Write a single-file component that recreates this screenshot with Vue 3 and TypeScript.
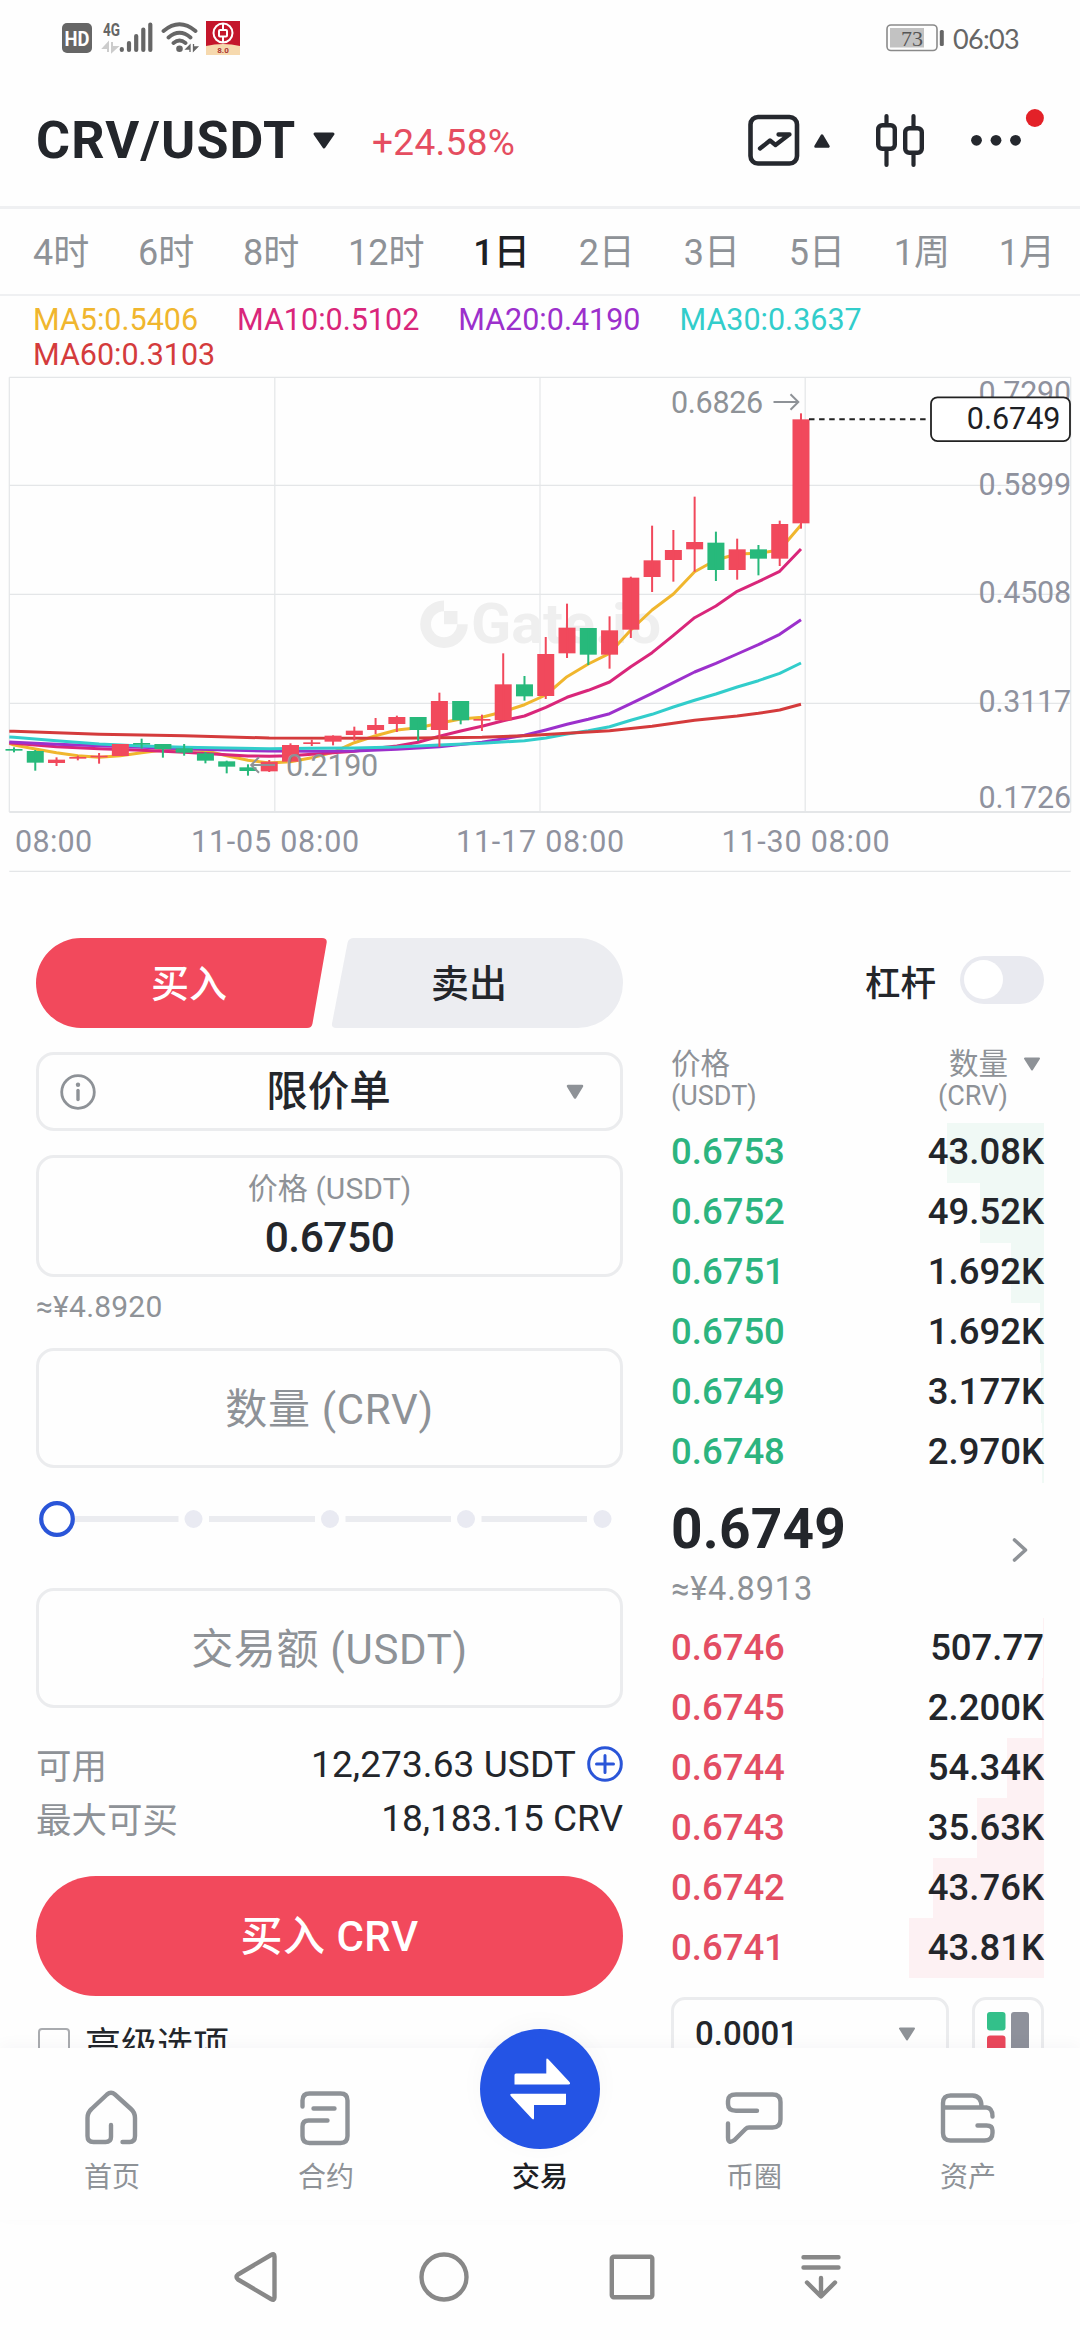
<script setup lang="ts">
import { ref } from 'vue'

type Candle = [up: 0 | 1, top: number, bottom: number, high: number, low: number]
interface BookRow { price: string; amount: string; depth: number }

const pair = 'CRV/USDT'
const periods = ['4时', '6时', '8时', '12时', '1日', '2日', '3日', '5日', '1周', '1月']
const activePeriod = ref('1日')

const averages = [
  { text: 'MA5:0.5406', color: '#f0b62e' },
  { text: 'MA10:0.5102', color: '#d9267a' },
  { text: 'MA20:0.4190', color: '#9c30cc' },
  { text: 'MA30:0.3637', color: '#32cdcb' },
  { text: 'MA60:0.3103', color: '#d43b3c' },
]

// Vertical chart values are in thirds of a pixel.
const S = 3
const xAt = (i: number): number => 14 + 21.27 * i

const candles: Candle[] = [
  [0, 1137, 1142, 1132, 1147], [0, 1143, 1178, 1140, 1202], [1, 1169, 1179, 1162, 1188],
  [1, 1161, 1166, 1157, 1171], [1, 1157, 1162, 1149, 1181], [1, 1122, 1158, 1122, 1158],
  [0, 1119, 1124, 1106, 1136], [0, 1122, 1137, 1122, 1163], [0, 1135, 1148, 1122, 1157],
  [0, 1150, 1172, 1146, 1180], [0, 1174, 1190, 1172, 1210], [0, 1192, 1203, 1183, 1217],
  [1, 1175, 1204, 1170, 1206], [1, 1125, 1175, 1120, 1177], [1, 1117, 1122, 1109, 1128],
  [1, 1097, 1115, 1096, 1126], [1, 1082, 1095, 1070, 1112], [1, 1065, 1080, 1044, 1092],
  [1, 1041, 1062, 1037, 1086], [0, 1041, 1080, 1041, 1113], [1, 993, 1080, 968, 1131],
  [0, 993, 1051, 993, 1063], [1, 1047, 1052, 1034, 1083], [1, 943, 1051, 850, 1052],
  [0, 943, 979, 918, 992], [1, 852, 978, 801, 987], [1, 773, 850, 701, 864],
  [0, 774, 854, 774, 885], [1, 781, 854, 739, 896], [1, 623, 779, 620, 804],
  [1, 571, 621, 467, 666], [1, 540, 570, 480, 635], [1, 516, 538, 380, 605],
  [0, 518, 600, 485, 633], [1, 538, 600, 506, 629], [0, 538, 566, 525, 616],
  [1, 462, 566, 452, 588], [1, 148, 460, 130, 476],
]

const series: { color: string; start: number; points: [number, number][] }[] = [
  {
    color: '#f0b62e', start: 1120,
    points: [[0, 1125], [1, 1137], [2, 1148], [3, 1157], [4, 1162], [5, 1157], [6, 1148], [7, 1140], [8, 1137],
      [9, 1142], [10, 1157], [11, 1171], [12, 1179], [13, 1175], [14, 1163], [15, 1147], [16, 1118], [17, 1097],
      [18, 1080], [19, 1073], [20, 1060], [21, 1047], [22, 1042], [23, 1025], [24, 1004], [25, 975], [26, 920],
      [27, 882], [28, 850], [29, 780], [30, 720], [31, 672], [32, 605], [33, 570], [34, 552], [35, 550], [36, 540],
      [37, 465]],
  },
  {
    color: '#d9267a', start: 1119,
    points: [[0, 1120], [2, 1130], [4, 1136], [6, 1141], [8, 1147], [10, 1154], [11, 1158], [12, 1159], [13, 1157],
      [14, 1153], [15, 1148], [16, 1144], [17, 1135], [18, 1128], [19, 1117], [20, 1099], [21, 1083], [22, 1069],
      [23, 1052], [24, 1038], [25, 1012], [26, 982], [27, 961], [28, 936], [29, 890], [30, 848], [31, 796],
      [32, 743], [33, 708], [34, 664], [35, 635], [36, 604], [37, 537]],
  },
  {
    color: '#9c30cc', start: 1116,
    points: [[0, 1117], [2, 1123], [4, 1127], [6, 1132], [8, 1136], [10, 1140], [12, 1143], [14, 1144], [16, 1143],
      [18, 1138], [20, 1130], [22, 1117], [24, 1096], [25, 1080], [26, 1063], [27, 1048], [28, 1031], [29, 1001],
      [30, 970], [31, 938], [32, 906], [33, 880], [34, 852], [35, 824], [36, 793], [37, 749]],
  },
  {
    color: '#32cdcb', start: 1101,
    points: [[0, 1102], [2, 1112], [4, 1122], [6, 1128], [8, 1132], [10, 1134], [12, 1136], [14, 1135], [16, 1134],
      [18, 1131], [20, 1125], [22, 1120], [24, 1112], [25, 1104], [26, 1092], [27, 1082], [28, 1070], [29, 1051],
      [30, 1033], [31, 1011], [32, 991], [33, 972], [34, 951], [35, 932], [36, 910], [37, 879]],
  },
  {
    color: '#d43b3c', start: 1084,
    points: [[0, 1084], [4, 1093], [8, 1097], [12, 1104], [18, 1105], [22, 1102], [24, 1097], [26, 1090], [28, 1082],
      [30, 1069], [32, 1051], [34, 1038], [35, 1030], [36, 1020], [37, 1003]],
  },
]

const linePoints = (start: number, points: [number, number][]): string =>
  [`9.3,${start / S}`, ...points.map(([i, y]) => `${xAt(i).toFixed(1)},${(y / S).toFixed(1)}`)].join(' ')

const priceLabels = [
  { y: 32.7, text: '0.7290' },
  { y: 124.8, text: '0.5899' },
  { y: 232.8, text: '0.4508' },
  { y: 341.8, text: '0.3117' },
  { y: 437.7, text: '0.1726' },
]

const asks: BookRow[] = [
  { price: '0.6753', amount: '43.08K', depth: 97 },
  { price: '0.6752', amount: '49.52K', depth: 64 },
  { price: '0.6751', amount: '1.692K', depth: 33 },
  { price: '0.6750', amount: '1.692K', depth: 4 },
  { price: '0.6749', amount: '3.177K', depth: 3 },
  { price: '0.6748', amount: '2.970K', depth: 2 },
]
const bids: BookRow[] = [
  { price: '0.6746', amount: '507.77', depth: 1 },
  { price: '0.6745', amount: '2.200K', depth: 2 },
  { price: '0.6744', amount: '54.34K', depth: 37 },
  { price: '0.6743', amount: '35.63K', depth: 67 },
  { price: '0.6742', amount: '43.76K', depth: 111 },
  { price: '0.6741', amount: '43.81K', depth: 135 },
]

const tabs = [
  {
    label: '首页',
    icon: 'M29 37V49Q29 54 23.500 54H11.500Q5.500 54 5.500 48V30Q5.500 24.500 9.500 21L25 6.500Q29 3 33 6.500L49 21Q53 24.500 53 30V48Q53 54 47.500 54H40.500',
  },
  {
    label: '合约',
    icon: 'M6.500 18.500V12.500Q6.500 5.500 13.500 5.500H44.500Q51.500 5.500 51.500 12.500V48Q51.500 55 44.500 55H13.500Q6.500 55 6.500 48V38.500Q6.500 32.500 12.500 32.500H31.500M17.500 20.500H38.500',
  },
  { label: '交易', icon: '' },
  {
    label: '币圈',
    icon: 'M33 22.700H12Q4 22.700 4 16V13Q4 6.500 12 6.500H48.500Q56.500 6.500 56.500 14V31.500Q56.500 39.500 48.500 39.500H25Q23 39.500 21.500 41L10.500 52Q4 56.500 4 49.500V35.500',
  },
  {
    label: '资产',
    icon: 'M5 19.500H48.500Q54.500 20 54.500 28.500M5 15Q5 7.500 12.500 7.500H34.500Q43.500 8 43.500 18.500M5 15V45Q5 52.500 12.500 52.500H46.500Q54.500 52.500 54.500 45V42.500Q54.500 37.500 48.500 37.500H39.500',
  },
]
</script>

<template>
  <div class="screen">
    <div class="status">
      <svg class="status-left" width="190" height="40" viewBox="58 18 190 40">
        <rect x="62" y="23" width="30" height="30" rx="5" fill="#666" />
        <text x="77" y="45.500" text-anchor="middle" textLength="25" lengthAdjust="spacingAndGlyphs" class="hd">HD</text>
        <text x="103" y="36" textLength="17" lengthAdjust="spacingAndGlyphs" class="net">4G</text>
        <path d="M108 52V43L103.500 48H108M112 42V51.500L117 47H112" fill="#ccc" stroke="#ccc" stroke-width="2" />
        <g stroke="#666" stroke-width="4.200" stroke-linecap="round">
          <path d="M121.800 49V50M129 43V50M136.200 36V50M143.300 29.500V50M150.300 24.500V50" />
        </g>
        <g fill="none" stroke="#666" stroke-width="3.800" stroke-linecap="round">
          <path d="M163.500 31Q179.500 17.500 195.500 31M168.500 37.500Q179.500 28 190.500 37.500M173.500 43Q179.500 38 185.500 43" />
        </g>
        <circle cx="179.500" cy="48.700" r="3.300" fill="#666" />
        <path d="M190 52V45L186 49H190M193.500 44V51L197.500 47H193.500" fill="#666" stroke="#666" stroke-width="1.300" />
        <rect x="206" y="21" width="34" height="34" fill="#c4162b" />
        <path d="M206 46Q223 42 240 46V55H206Z" fill="#f6d9ae" />
        <circle cx="223" cy="33" r="9.500" fill="none" stroke="#fff" stroke-width="2" />
        <rect x="219" y="30" width="8" height="6.500" rx="1" fill="none" stroke="#fff" stroke-width="2" />
        <path d="M223 23V30M223 36.500V43" stroke="#fff" stroke-width="2" />
        <text x="223" y="52.500" text-anchor="middle" class="badge-ver">8.0</text>
      </svg>
      <div class="status-right">
        <svg width="60" height="30" viewBox="885 22 60 30">
          <rect x="887" y="25" width="50" height="25.500" rx="4" fill="none" stroke="#8a8a8a" stroke-width="1.600" />
          <rect x="890" y="28" width="34" height="19.500" fill="#c2c2c2" />
          <rect x="939.800" y="30" width="4" height="16" rx="1.500" fill="#666" />
          <text x="901" y="46" class="battery-num">73</text>
        </svg>
        <span class="clock">06:03</span>
      </div>
    </div>

    <header class="header">
      <h1>{{ pair }}</h1>
      <svg class="caret" width="24" height="20" viewBox="0 0 24 20">
        <path d="M3 3H21L12 16Z" fill="#23262c" stroke="#23262c" stroke-width="3" stroke-linejoin="round" />
      </svg>
      <span class="change">+24.58%</span>
      <svg class="tools" width="304" height="64" viewBox="744 106 304 64" fill="none" stroke="#25282e" stroke-linecap="round" stroke-linejoin="round">
        <rect x="750.500" y="117" width="46.500" height="46.500" rx="7.500" stroke-width="4.600" />
        <path d="M760 148.500L770 140.500L775.500 145L788.500 135M778.500 134.500H789.500" stroke-width="4.300" />
        <path d="M822 135.500L828.500 146.500H815.500Z" fill="#25282e" stroke-width="2.500" />
        <rect x="878.200" y="125.200" width="16.600" height="23.600" rx="4" stroke-width="4.400" />
        <rect x="905.200" y="128.200" width="16.600" height="24.600" rx="4" stroke-width="4.400" />
        <path d="M886.500 116V123M886.500 151V165M913.500 116V126M913.500 155V165" stroke-width="4.200" />
        <g fill="#25282e" stroke="none">
          <circle cx="976.500" cy="140.300" r="5.400" />
          <circle cx="996" cy="140.300" r="5.400" />
          <circle cx="1015.500" cy="140.300" r="5.400" />
        </g>
        <circle cx="1034.900" cy="118" r="9" fill="#e32128" stroke="none" />
      </svg>
    </header>

    <nav class="periods">
      <button v-for="p in periods" :key="p" :class="{ active: p === activePeriod }" @click="activePeriod = p">{{ p }}</button>
    </nav>

    <div class="legend">
      <span v-for="m in averages" :key="m.text" :style="{ color: m.color }">{{ m.text }}</span>
    </div>

    <svg class="chart" width="1080" height="505" viewBox="0 0 1080 505">
      <g stroke="#e4e6e8" stroke-width="1.200" fill="none">
        <path d="M9.300 7.300H1070.700M9.300 115.300H1070.700M9.300 224.300H1070.700M9.300 333.300H1070.700" />
        <path d="M9.300 7.300V442M274.800 7.300V442M540 7.300V442M805.200 7.300V442M1070.700 7.300V442" />
        <path d="M9.300 442H1070.700" stroke-width="1.800" />
        <path d="M9.300 501.300H1070.700" />
      </g>
      <g fill="#efefef">
        <path d="M444 230.400A23.800 23.800 0 1 0 467.800 254.200H457A13 13 0 1 1 444 241.200Z" />
        <rect x="444" y="241" width="13.500" height="13.200" />
        <text x="471" y="273" textLength="190" lengthAdjust="spacingAndGlyphs" class="mark">Gate.io</text>
      </g>
      <polyline
        v-for="s in series" :key="s.color" :points="linePoints(s.start, s.points)"
        fill="none" :stroke="s.color" stroke-width="3" stroke-linejoin="round"
      />
      <g v-for="(c, i) in candles" :key="i" :fill="c[0] ? '#f1495c' : '#27b97b'">
        <rect :x="xAt(i) - 8.500" :y="c[1] / S" width="17" :height="(c[2] - c[1]) / S" />
        <rect :x="xAt(i) - 1" :y="c[3] / S" width="2" :height="(c[4] - c[3]) / S" />
      </g>
      <g class="note">
        <text x="671" y="42.700">0.6826</text>
        <path d="M773.500 32H798M790.500 24.200L798.300 32L790.500 39.800" />
        <text x="286" y="405.700">0.2190</text>
        <path d="M275 395H251.500M259 387.200L251.200 395L259 402.800" />
      </g>
      <g class="axis" text-anchor="end">
        <text v-for="l in priceLabels" :key="l.text" x="1071" :y="l.y">{{ l.text }}</text>
      </g>
      <g class="axis" text-anchor="middle">
        <text x="53.500" y="482" textLength="77">08:00</text>
        <text x="275" y="482" textLength="168">11-05 08:00</text>
        <text x="540" y="482" textLength="168">11-17 08:00</text>
        <text x="805.500" y="482" textLength="168">11-30 08:00</text>
      </g>
      <path d="M809 49.300H930" stroke="#222" stroke-width="2" stroke-dasharray="5.500 4.600" />
      <rect x="931" y="27.300" width="139" height="43.800" rx="6.500" fill="#fff" stroke="#222" stroke-width="1.800" />
      <text x="1060.500" y="59" text-anchor="end" class="tag">0.6749</text>
    </svg>

    <main class="trade">
      <section class="form">
        <div class="sides">
          <svg width="587" height="90" viewBox="0 0 587 90">
            <path d="M45 0H286Q291.500 0 290.600 5L276.500 85.500Q275.700 90 271 90H45A45 45 0 0 1 45 0Z" fill="#f2495c" />
            <path d="M318 0H542A45 45 0 0 1 542 90H300Q295.300 90 296 85.500L311.500 5Q312.500 0 318 0Z" fill="#ecedf1" />
          </svg>
          <span class="buy">买入</span>
          <span class="sell">卖出</span>
        </div>

        <div class="box order-type">
          <svg width="36" height="36" viewBox="0 0 36 36">
            <circle cx="18" cy="18" r="16.300" fill="none" stroke="#8e9297" stroke-width="2.800" />
            <circle cx="18" cy="10.800" r="2.200" fill="#8e9297" />
            <path d="M18 16.500V25.500" stroke="#8e9297" stroke-width="3.400" stroke-linecap="round" />
          </svg>
          <span>限价单</span>
          <svg width="20" height="18" viewBox="0 0 20 18">
            <path d="M3 3H17L10 14.500Z" fill="#8e9297" stroke="#8e9297" stroke-width="2.500" stroke-linejoin="round" />
          </svg>
        </div>

        <div class="box price">
          <span class="hint">价格 (USDT)</span>
          <span class="value">0.6750</span>
        </div>
        <div class="approx">≈¥4.8920</div>

        <div class="box field">数量 (CRV)</div>

        <svg class="slider" width="587" height="40" viewBox="36 1499 587 40">
          <path d="M70 1519H178.500M209 1519H315M345.500 1519H451M481.500 1519H587" stroke="#ebecf0" stroke-width="6" />
          <g fill="#e9eaf2">
            <circle cx="193.500" cy="1519" r="9" />
            <circle cx="330" cy="1519" r="9" />
            <circle cx="466" cy="1519" r="9" />
            <circle cx="602.500" cy="1519" r="9" />
          </g>
          <circle cx="57" cy="1519" r="15.800" fill="#fff" stroke="#2a55d8" stroke-width="4.200" />
        </svg>

        <div class="box field">交易额 (USDT)</div>

        <div class="info first">
          <span class="k">可用</span>
          <span class="v">12,273.63 USDT</span>
          <svg width="36" height="36" viewBox="0 0 36 36" fill="none" stroke="#2a55d8" stroke-width="3">
            <circle cx="18" cy="18" r="16.300" />
            <path d="M18 9.500V26.500M9.500 18H26.500" stroke-linecap="round" />
          </svg>
        </div>
        <div class="info">
          <span class="k">最大可买</span>
          <span class="v">18,183.15 CRV</span>
        </div>

        <button class="submit">买入 CRV</button>

        <label class="advanced"><i></i>高级选项</label>
      </section>

      <section class="book">
        <div class="margin">
          <span>杠杆</span>
          <i class="toggle"><b></b></i>
        </div>
        <div class="book-head">
          <div>价格<small>(USDT)</small></div>
          <div class="qty">数量<small>(CRV)</small></div>
          <svg width="18" height="16" viewBox="0 0 18 16">
            <path d="M2 2.500H16L9 13.500Z" fill="#8e9297" stroke="#8e9297" stroke-width="2" stroke-linejoin="round" />
          </svg>
        </div>
        <div v-for="r in asks" :key="r.price" class="row ask">
          <i :style="{ width: r.depth + 'px' }"></i>
          <span>{{ r.price }}</span><span>{{ r.amount }}</span>
        </div>
        <div class="last">
          <div>
            <strong>0.6749</strong>
            <em>≈¥4.8913</em>
          </div>
          <svg width="18" height="28" viewBox="0 0 18 28">
            <path d="M3.500 4L14.500 14L3.500 24" fill="none" stroke="#8e9297" stroke-width="3.600" stroke-linecap="round" stroke-linejoin="round" />
          </svg>
        </div>
        <div v-for="r in bids" :key="r.price" class="row bid">
          <i :style="{ width: r.depth + 'px' }"></i>
          <span>{{ r.price }}</span><span>{{ r.amount }}</span>
        </div>
        <div class="depth-tools">
          <div class="step">
            <span>0.0001</span>
            <svg width="18" height="16" viewBox="0 0 18 16">
              <path d="M2 2.500H16L9 13.500Z" fill="#8e9297" stroke="#8e9297" stroke-width="2" stroke-linejoin="round" />
            </svg>
          </div>
          <div class="mode">
            <svg width="42" height="42" viewBox="0 0 42 42">
              <rect width="18.500" height="18.500" rx="3" fill="#33c08a" />
              <rect y="23.500" width="18.500" height="18.500" rx="3" fill="#ea475b" />
              <rect x="24" width="18" height="42" rx="3" fill="#8e919b" />
            </svg>
          </div>
        </div>
      </section>
    </main>

    <nav class="tabbar">
      <div v-for="t in tabs" :key="t.label" class="tab" :class="{ on: !t.icon }">
        <svg v-if="t.icon" width="60" height="60" viewBox="0 0 60 60" fill="none" stroke="#8e9297" stroke-width="4.400" stroke-linecap="round" stroke-linejoin="round">
          <path :d="t.icon" />
        </svg>
        <div v-else class="fab">
          <svg width="120" height="120" viewBox="0 0 120 120" fill="#fff">
            <path d="M36 44.500H66.300V31Q66.300 28.500 68.300 30.200L89.500 53Q91 55.400 88.500 55.400H34.500V46Q34.500 44.500 36 44.500Z" />
            <path d="M84.500 76H54V89Q54 91.500 52 89.800L30.800 67Q29.300 64.800 31.800 64.800H86V74.500Q86 76 84.500 76Z" />
          </svg>
        </div>
        <span>{{ t.label }}</span>
      </div>
    </nav>

    <div class="sysnav">
      <svg width="1080" height="60" viewBox="0 2247 1080 60" fill="none" stroke="#888" stroke-width="4.400" stroke-linejoin="round" stroke-linecap="round">
        <path d="M238 2274.500Q235 2277 238 2279.500L271 2299Q274.500 2301 274.500 2297.500V2256.500Q274.500 2253 271 2255Z" />
        <circle cx="444" cy="2277" r="22.500" />
        <rect x="611.800" y="2256.800" width="40.500" height="40.500" rx="2" />
        <path d="M803.500 2257.200H838.500M803.500 2267.500H838.500M821 2278V2296M807 2282.500L821 2296.500L835 2282.500" />
      </svg>
    </div>
  </div>
</template>

<style>
html,
body {
  background: #fefefe;
}
</style>

<style scoped>
.screen {
  display: flex;
  flex-direction: column;
  width: 1080px;
  height: 2340px;
  overflow: hidden;
  background: #fefefe;
  color: #23262b;
  font-family: Roboto, "Noto Sans CJK SC", sans-serif;
}

.screen > * {
  flex: none;
}

.screen svg {
  display: block;
  flex: none;
}

button {
  margin: 0;
  padding: 0;
  border: 0;
  background: none;
  color: inherit;
  font: inherit;
}

.status {
  display: flex;
  justify-content: space-between;
  height: 76px;
  box-sizing: border-box;
  padding: 18px 60px 0 58px;
}

.hd {
  font: 700 20.500px Roboto, sans-serif;
  fill: #fff;
}

.net {
  font: 700 19px Roboto, sans-serif;
  fill: #666;
}

.badge-ver {
  font: 700 8px Roboto, sans-serif;
  fill: #a33;
}

.status-right {
  display: flex;
  align-items: flex-start;
  padding-top: 4px;
}

.battery-num {
  font: 400 22px "Liberation Serif", serif;
  fill: #555;
}

.clock {
  margin-left: 8px;
  margin-top: 1px;
  width: 67px;
  white-space: nowrap;
  font: 400 27px/32px Lato, sans-serif;
  letter-spacing: -0.700px;
  color: #666;
}

.header {
  display: flex;
  align-items: center;
  height: 133px;
  box-sizing: border-box;
  padding: 0 32px 7px 36px;
  border-bottom: 3px solid #eff0f2;
}

h1 {
  margin: 6px 0 0;
  width: 276px;
  font-size: 52px;
  line-height: 60px;
  font-weight: 700;
  letter-spacing: 1.200px;
  white-space: nowrap;
}

.caret {
  margin-top: 6px;
}

.change {
  margin-left: 36px;
  margin-top: 10px;
  font-size: 37px;
  line-height: 44px;
  letter-spacing: 0.300px;
  color: #e54d60;
}

.tools {
  margin-left: auto;
}

.periods {
  display: flex;
  gap: 48.800px;
  height: 86.500px;
  box-sizing: border-box;
  padding: 4px 0 0 33px;
  align-items: center;
  border-bottom: 2.500px solid #eff0f2;
  overflow: hidden;
}

.periods button {
  flex: none;
  font-size: 36px;
  line-height: 48px;
  color: #8e9297;
  white-space: nowrap;
}

.periods .active {
  font-weight: 500;
  color: #1d2024;
}

.legend {
  display: flex;
  flex-wrap: wrap;
  align-content: flex-start;
  column-gap: 39px;
  height: 74.500px;
  padding: 6px 30px 0 33px;
  box-sizing: border-box;
  font-size: 30.500px;
  line-height: 35px;
}

.chart {
  height: 505px;
}

.mark {
  font: 700 56px Roboto, sans-serif;
}

.note text {
  font-size: 30.500px;
  letter-spacing: -0.300px;
  fill: #8e9297;
}

.note path {
  fill: none;
  stroke: #8e9297;
  stroke-width: 2;
}

.axis text {
  font-size: 30.500px;
  letter-spacing: -0.200px;
  fill: #8f929e;
}

.tag {
  font-size: 30.500px;
  fill: #1d2024;
}

.trade {
  display: flex;
  justify-content: space-between;
  height: 1173px;
  box-sizing: border-box;
  padding: 63px 36px 0;
  overflow: hidden;
}

.form {
  width: 587px;
}

.book {
  width: 373px;
}

.sides {
  position: relative;
  display: flex;
  height: 90px;
  font-size: 38px;
  line-height: 93px;
  font-weight: 500;
  text-align: center;
}

.sides svg {
  position: absolute;
  inset: 0;
}

.sides span {
  position: relative;
}

.buy {
  width: 306px;
  color: #fff;
}

.sell {
  width: 254px;
}

.box {
  box-sizing: border-box;
  border: 3px solid #ebecee;
  border-radius: 18px;
}

.order-type {
  display: flex;
  align-items: center;
  justify-content: space-between;
  height: 79px;
  margin-top: 24px;
  padding: 0 35px 0 21px;
  font-size: 41.500px;
  font-weight: 500;
}

.order-type span {
  line-height: 56px;
  padding: 1px 4px 0 0;
}

.price {
  display: flex;
  flex-direction: column;
  align-items: center;
  height: 122px;
  margin-top: 24px;
  padding-top: 11px;
}

.hint {
  font-size: 30px;
  line-height: 40px;
  letter-spacing: 0.100px;
  color: #8e9297;
}

.value {
  margin-top: 4px;
  font-size: 42.500px;
  line-height: 50px;
  font-weight: 500;
  letter-spacing: -0.500px;
}

.approx {
  height: 71px;
  padding-top: 11px;
  box-sizing: border-box;
  font-size: 30px;
  line-height: 38px;
  letter-spacing: 0.200px;
  color: #8e9297;
}

.field {
  height: 120px;
  font-size: 42px;
  line-height: 117px;
  letter-spacing: 0.700px;
  text-align: center;
  color: #8e9297;
}

.slider {
  margin: 31px 0 49px;
}

.info {
  display: flex;
  align-items: center;
  height: 54px;
  font-size: 37px;
  color: #23262b;
}

.info.first {
  margin-top: 29px;
}

.k {
  margin-top: -2px;
  font-size: 35.500px;
  color: #8e9297;
}

.v {
  margin-left: auto;
  white-space: nowrap;
}

.info.first .v {
  letter-spacing: 0.100px;
}

.info svg {
  margin-left: 11px;
}

.submit {
  display: block;
  width: 587px;
  height: 120px;
  margin-top: 31px;
  border-radius: 60px;
  background: #f2495c;
  color: #fff;
  font-size: 42px;
  font-weight: 500;
  letter-spacing: 0.500px;
  line-height: 122px;
}

.advanced {
  display: flex;
  align-items: flex-start;
  margin-top: 26px;
  font-size: 36px;
  line-height: 48px;
  white-space: nowrap;
}

.advanced i {
  width: 32px;
  height: 32px;
  margin: 6px 15px 0 2px;
  box-sizing: border-box;
  border: 2px solid #a9abaf;
  border-radius: 4px;
}

.margin {
  display: flex;
  align-items: center;
  justify-content: flex-end;
  height: 84px;
  gap: 24px;
  font-size: 35.500px;
  font-weight: 500;
}

.toggle {
  width: 84px;
  height: 48px;
  box-sizing: border-box;
  padding: 4px;
  border-radius: 24px;
  background: #e9eaf0;
}

.toggle b {
  display: block;
  width: 39px;
  height: 39px;
  border-radius: 50%;
  background: #fff;
}

.book-head {
  display: flex;
  height: 100.500px;
  box-sizing: border-box;
  padding-top: 25px;
  font-size: 29.500px;
  line-height: 34px;
  color: #8e9297;
}

.book-head small {
  display: block;
  font-size: 27px;
  line-height: 31px;
}

.qty {
  margin-left: auto;
  text-align: right;
}

.book-head svg {
  margin: 9px 3px 0 15px;
}

.row {
  position: relative;
  display: flex;
  justify-content: space-between;
  height: 60px;
  font-size: 36.500px;
  line-height: 58px;
  font-weight: 500;
}

.row span {
  position: relative;
}

.row i {
  position: absolute;
  top: 0;
  right: 0;
  height: 60px;
}

.ask i {
  background: #f0f9f5;
}

.bid {
  line-height: 60px;
}

.bid i {
  background: #fdf1f3;
}

.ask span:nth-child(2) {
  color: #2cb47f;
}

.bid span:nth-child(2) {
  color: #e34d63;
}

.last {
  display: flex;
  align-items: center;
  justify-content: space-between;
  height: 135px;
  padding-right: 15px;
}

.last strong {
  display: block;
  padding-top: 4px;
  font-size: 55px;
  line-height: 64px;
  letter-spacing: 0.200px;
}

.last em {
  display: block;
  margin-top: 9px;
  font-size: 32.500px;
  line-height: 38px;
  font-style: normal;
  letter-spacing: 0.850px;
  color: #8e9297;
}

.depth-tools {
  display: flex;
  justify-content: space-between;
  margin-top: 19px;
}

.step,
.mode {
  height: 72px;
  box-sizing: border-box;
  border: 3px solid #ebecee;
  border-radius: 14px;
}

.step {
  display: flex;
  align-items: center;
  justify-content: space-between;
  width: 278px;
  padding: 2px 30px 0 21px;
  font-size: 33px;
  font-weight: 500;
}

.mode {
  width: 72px;
  padding: 12px;
}

.tabbar {
  position: relative;
  display: flex;
  height: 172px;
  padding: 0 5px;
  background: #fefefe;
  box-shadow: 0 -4px 14px rgba(30, 40, 60, 0.030);
}

.tab {
  display: flex;
  flex-direction: column;
  align-items: center;
  width: 214px;
  padding-top: 40px;
  font-size: 28px;
  line-height: 36px;
  color: #8e9297;
}

.tab > svg {
  margin-bottom: 12px;
}

.tab.on {
  padding-top: 0;
  color: #1d2024;
  font-weight: 500;
}

.fab {
  flex: none;
  width: 120px;
  height: 120px;
  margin-top: -19px;
  margin-bottom: 11px;
  border-radius: 50%;
  background: #2454e5;
  box-shadow: 0 -4px 24px rgba(30, 40, 60, 0.030);
}

.sysnav {
  padding-top: 27px;
}
</style>
